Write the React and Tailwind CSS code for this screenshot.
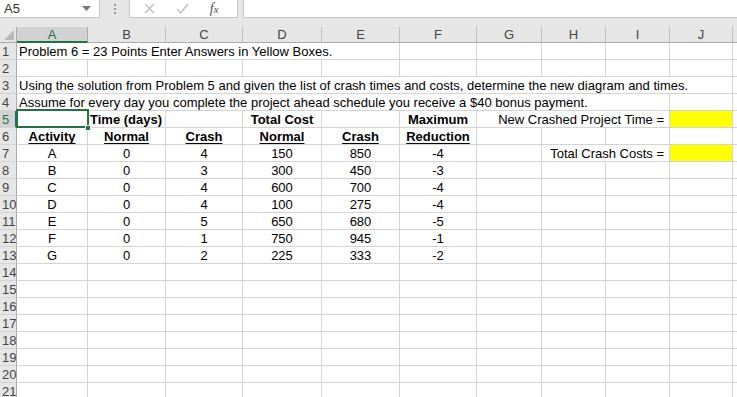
import React from "react";

const G = "border-r border-b border-[#d4d4d4]";

function Cell({ span = 1, className = "", children }) {
  const spanCls = {
    1: "",
    2: "col-span-2",
    3: "col-span-3",
    5: "col-span-5",
    9: "col-span-9",
    10: "col-span-10",
  }[span];
  return (
    <div className={`${G} ${spanCls} h-[17px] flex items-center whitespace-nowrap overflow-visible px-[2px] pt-[2px] ${className}`}>
      {children}
    </div>
  );
}

function RowHead({ n, selected }) {
  return (
    <div
      className={`h-[17px] flex items-center pl-[2px] pt-[1px] text-[13px] border-b border-[#d4d4d4] ${
        selected
          ? "bg-[#d2d2d2] text-[#217346] border-r-2 border-r-[#217346]"
          : "bg-[#e6e6e6] text-[#444] border-r border-r-[#ababab]"
      }`}
    >
      {n}
    </div>
  );
}

const data = [
  ["A", 0, 4, 150, 850, -4],
  ["B", 0, 3, 300, 450, -3],
  ["C", 0, 4, 600, 700, -4],
  ["D", 0, 4, 100, 275, -4],
  ["E", 0, 5, 650, 680, -5],
  ["F", 0, 1, 750, 945, -1],
  ["G", 0, 2, 225, 333, -2],
];

const letters = ["A", "B", "C", "D", "E", "F", "G", "H", "I", "J"];

export default function App() {
  return (
    <div className="w-[737px] h-[397px] overflow-hidden bg-white text-black text-[13px] font-['Liberation_Sans',Arial,sans-serif]">
      {/* formula bar */}
      <div className="h-[27px] bg-[#e6e6e6] flex items-start">
        <div className="w-[100px] h-[18px] bg-white border-r border-b border-[#c6c6c6] flex items-center justify-between pl-[4px] pr-[8px]">
          <span className="text-[#333] text-[13px]">A5</span>
          <svg width="9" height="5" viewBox="0 0 9 5">
            <polygon points="0,0 9,0 4.5,5" fill="#777" />
          </svg>
        </div>
        <div className="w-[29px] h-[18px] flex flex-col items-center justify-center gap-[2px]">
          <div className="w-[2px] h-[2px] bg-[#999]" />
          <div className="w-[2px] h-[2px] bg-[#999]" />
          <div className="w-[2px] h-[2px] bg-[#999]" />
        </div>
        <div className="w-[109px] h-[18px] bg-white border-x border-b border-[#c6c6c6] flex items-center justify-around pl-[4px] pr-[8px]">
          <svg width="11" height="11" viewBox="0 0 11 11">
            <path d="M1 1 L10 10 M10 1 L1 10" stroke="#bdbdbd" strokeWidth="1.3" fill="none" />
          </svg>
          <svg width="13" height="11" viewBox="0 0 13 11">
            <path d="M1 6 L4.5 10 L12 1" stroke="#bdbdbd" strokeWidth="1.3" fill="none" />
          </svg>
          <span className="font-['Liberation_Serif',serif] italic text-[14px] text-[#555]">
            f<span className="text-[11px]">x</span>
          </span>
        </div>
        <div className="w-[5px]" />
        <div className="flex-1 h-[18px] bg-white border-l border-b border-[#c6c6c6]" />
      </div>

      {/* sheet grid */}
      <div className="grid grid-cols-[17px_71px_78px_77px_79px_78px_77px_65px_64px_64px_63px_1fr]">
        {/* column header row */}
        <div className="h-[16px] bg-[#e6e6e6] border-r border-b border-[#ababab] flex items-end justify-end p-[2px]">
          <svg width="10" height="10" viewBox="0 0 10 10">
            <polygon points="10,0 10,10 0,10" fill="#b8b8b8" />
          </svg>
        </div>
        {letters.map((l, i) =>
          i === 0 ? (
            <div
              key={l}
              className="h-[16px] bg-[#d2d2d2] text-[#217346] border-r border-r-[#ababab] border-b-2 border-b-[#217346] flex items-center justify-center text-[13px] pt-[1px]"
            >
              {l}
            </div>
          ) : (
            <div
              key={l}
              className="h-[16px] bg-[#e6e6e6] text-[#444] border-r border-r-[#c0c0c0] border-b border-b-[#ababab] flex items-center justify-center text-[13px] pt-[1px]"
            >
              {l}
            </div>
          )
        )}
        <div className="h-[16px] bg-[#e6e6e6] border-b border-[#ababab]" />

        {/* row 1 */}
        <RowHead n={1} />
        <Cell span={5}>Problem 6 = 23 Points Enter Answers in Yellow Boxes.</Cell>
        <Cell />
        <Cell />
        <Cell />
        <Cell />
        <Cell />
        <div className="h-[17px] border-b border-[#d4d4d4]" />

        {/* row 2 */}
        <RowHead n={2} />
        {letters.map((l) => (
          <Cell key={l} />
        ))}
        <div className="h-[17px] border-b border-[#d4d4d4]" />

        {/* row 3 */}
        <RowHead n={3} />
        <Cell span={10}>
          Using the solution from Problem 5 and given the list of crash times and costs, determine the new diagram and times.
        </Cell>
        <div className="h-[17px] border-b border-[#d4d4d4]" />

        {/* row 4 */}
        <RowHead n={4} />
        <Cell span={9}>
          Assume for every day you complete the project ahead schedule you receive a $40 bonus payment.
        </Cell>
        <Cell />
        <div className="h-[17px] border-b border-[#d4d4d4]" />

        {/* row 5 */}
        <RowHead n={5} selected />
        <div className="relative h-[17px] border-b border-r border-[#d4d4d4]">
          <div className="absolute left-[-1px] top-[-2px] right-[-2px] bottom-[-1px] border-2 border-[#217346]" />
          <div className="absolute right-[-4px] bottom-[-4px] w-[6px] h-[6px] bg-[#217346] border border-white" />
        </div>
        <Cell className="font-bold">Time (days)</Cell>
        <Cell />
        <Cell className="font-bold justify-center">Total Cost</Cell>
        <Cell />
        <Cell className="font-bold justify-center">Maximum</Cell>
        <Cell span={3} className="justify-end pr-[5px]">New Crashed Project Time =</Cell>
        <Cell className="bg-[#ffff00]" />
        <div className="h-[17px] border-b border-[#d4d4d4]" />

        {/* row 6 */}
        <RowHead n={6} />
        {["Activity", "Normal", "Crash", "Normal", "Crash", "Reduction"].map((t, i) => (
          <Cell key={i} className="justify-center font-bold underline underline-offset-2">
            {t}
          </Cell>
        ))}
        <Cell />
        <Cell />
        <Cell />
        <Cell />
        <div className="h-[17px] border-b border-[#d4d4d4]" />

        {/* data rows */}
        {data.map((r, idx) => (
          <React.Fragment key={idx}>
            <RowHead n={7 + idx} />
            {r.map((v, j) => (
              <Cell key={j} className="justify-center">
                {v}
              </Cell>
            ))}
            {idx === 0 ? (
              <>
                <Cell />
                <Cell span={2} className="justify-end pr-[5px]">Total Crash Costs =</Cell>
                <Cell className="bg-[#ffff00]" />
              </>
            ) : (
              <>
                <Cell />
                <Cell />
                <Cell />
                <Cell />
              </>
            )}
            <div className="h-[17px] border-b border-[#d4d4d4]" />
          </React.Fragment>
        ))}

        {/* empty rows */}
        {[14, 15, 16, 17, 18, 19, 20, 21].map((n) => (
          <React.Fragment key={n}>
            <RowHead n={n} />
            {letters.map((l) => (
              <Cell key={l} />
            ))}
            <div className="h-[17px] border-b border-[#d4d4d4]" />
          </React.Fragment>
        ))}
      </div>
    </div>
  );
}
